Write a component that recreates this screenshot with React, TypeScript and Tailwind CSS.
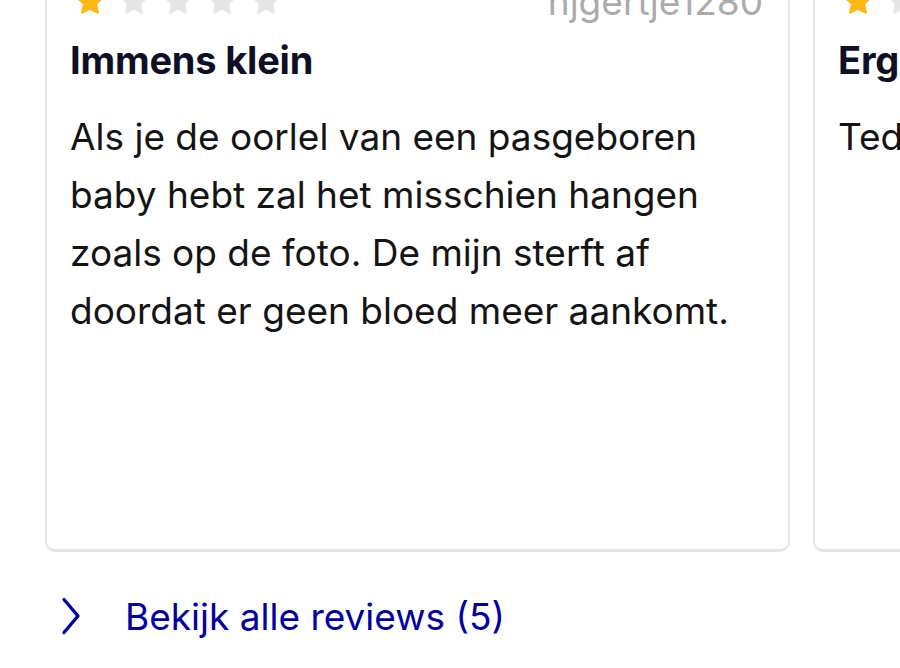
import React from 'react';

function Star({ filled }: { filled: boolean }) {
  return (
    <svg viewBox="0 0 24 24" className="w-[30px] h-[30px]">
      <path
        d="M12 1.8l3.1 6.6 7.1.9-5.2 5 1.3 7.1L12 18l-6.3 3.4 1.3-7.1-5.2-5 7.1-.9z"
        fill={filled ? '#fdb913' : '#e6e6e6'}
        stroke={filled ? '#fdb913' : '#e6e6e6'}
        strokeWidth="1.6"
        strokeLinejoin="round"
      />
    </svg>
  );
}

const reviews = [
  {
    rating: 1,
    author: 'hjgertje1280',
    title: 'Immens klein',
    body: 'Als je de oorlel van een pasgeboren baby hebt zal het misschien hangen zoals op de foto. De mijn sterft af doordat er geen bloed meer aankomt.',
  },
  {
    rating: 1,
    author: 'anoniem',
    title: 'Erg klein',
    body: 'Tedoen klein, niet zoals op de foto.',
  },
];

export default function App() {
  return (
    <div
      className="w-[900px] h-[668px] overflow-hidden bg-white"
      style={{ fontFamily: 'Inter, "Noto Sans", sans-serif' }}
    >
      {/* Review cards */}
      <div className="flex gap-[23px] pl-[45px] -mt-[40px]">
        {reviews.map((r, idx) => (
          <div
            key={idx}
            className="shrink-0 w-[745px] h-[592px] bg-white border-2 border-[#e6e6e6] border-b-[3px] rounded-[10px] pl-[23px] pr-[25px] pt-[22px]"
          >
            <div className="flex items-center justify-between h-[34px]">
              <div className="flex gap-[14px] pl-[5px]">
                {[1, 2, 3, 4, 5].map((s) => (
                  <Star key={s} filled={s <= r.rating} />
                ))}
              </div>
              <span className="text-[37px] text-[#ababab] leading-none">{r.author}</span>
            </div>
            <h3 className="mt-[18px] text-[38px] leading-[48px] font-bold text-[#0f1026] tracking-[-0.2px]">
              {r.title}
            </h3>
            <p className="mt-[24px] text-[37px] leading-[58px] text-[#141414]">
              {r.body}
            </p>
          </div>
        ))}
      </div>

      {/* Link */}
      <div className="flex items-center mt-[44px] pl-[61px] h-[40px]">
        <svg viewBox="0 0 20 38" className="w-[20px] h-[38px]" fill="none">
          <path d="M3 2.5l14 16.5L3 35.5" stroke="#0000a4" strokeWidth="3.4" strokeLinecap="round" strokeLinejoin="round" />
        </svg>
        <span className="ml-[44px] text-[37px] text-[#0000a4] leading-none">Bekijk alle reviews (5)</span>
      </div>
    </div>
  );
}
